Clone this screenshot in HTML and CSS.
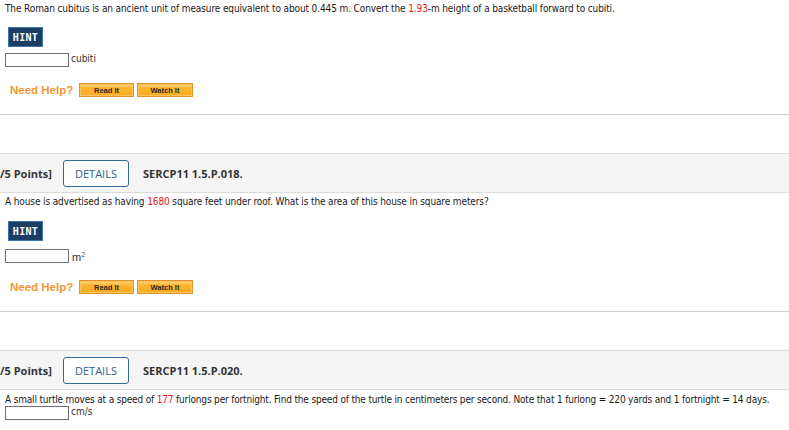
FILE: index.html
```html
<!DOCTYPE html>
<html lang="en">
<head>
    <meta charset="UTF-8">
    <meta name="viewport" content="width=device-width, initial-scale=1.0">
    <title>Assignment</title>
    <link rel="stylesheet" href="styles.css">
</head>
<body>
    <div class="question first">
        <p class="prompt">The Roman cubitus is an ancient unit of measure equivalent to about 0.445 m. Convert the <span class="val">1.93</span>-m height of a basketball forward to cubiti.</p>
        <button class="hint">HINT</button>
        <div class="answer">
            <input class="box" type="text">
            <span class="unit">cubiti</span>
        </div>
        <div class="help">
            <span class="help-label">Need Help?</span>
            <button class="help-btn">Read It</button>
            <button class="help-btn">Watch It</button>
        </div>
    </div>

    <div class="qhead">
        <span class="points">/5 Points]</span>
        <button class="details">DETAILS</button>
        <span class="code">SERCP11 1.5.P.018.</span>
    </div>
    <div class="question">
        <p class="prompt">A house is advertised as having <span class="val">1680</span> square feet under roof. What is the area of this house in square meters?</p>
        <button class="hint">HINT</button>
        <div class="answer">
            <input class="box" type="text">
            <span class="unit sq">m<sup>2</sup></span>
        </div>
        <div class="help">
            <span class="help-label">Need Help?</span>
            <button class="help-btn">Read It</button>
            <button class="help-btn">Watch It</button>
        </div>
    </div>

    <div class="qhead">
        <span class="points">/5 Points]</span>
        <button class="details">DETAILS</button>
        <span class="code">SERCP11 1.5.P.020.</span>
    </div>
    <div class="question last">
        <p class="prompt">A small turtle moves at a speed of <span class="val">177</span> furlongs per fortnight. Find the speed of the turtle in centimeters per second. Note that 1 furlong = 220 yards and 1 fortnight = 14 days.</p>
        <div class="answer tight">
            <input class="box" type="text">
            <span class="unit">cm/s</span>
        </div>
        <div class="help">
            <span class="help-label">Need Help?</span>
            <button class="help-btn">Read It</button>
            <button class="help-btn">Watch It</button>
        </div>
    </div>
</body>
</html>
```

FILE: styles.css
```css
* {
    box-sizing: border-box;
    margin: 0;
    padding: 0;
}

body {
    font-family: "DejaVu Sans Condensed", "DejaVu Sans", sans-serif;
    font-size: 10px;
    color: #1a1a1a;
    background: #fff;
    overflow: hidden;
    height: 430px;
}

.question {
    padding: 2px 0 17px;
    border-bottom: 1px solid #cfcfcf;
    margin-bottom: 38px;
}

.question.last {
    border-bottom: none;
    margin-bottom: 0;
    padding-top: 3px;
}

.prompt {
    line-height: 14px;
    padding-left: 5px;
    white-space: nowrap;
    letter-spacing: -0.12px;
}

.question.last .prompt {
    line-height: 13px;
    letter-spacing: -0.17px;
}

.val {
    color: #f0141e;
}

.hint {
    display: block;
    margin: 11px 0 0 8px;
    width: 35px;
    height: 20px;
    background: #1d3e64;
    border: 1px solid #3b74ad;
    color: #fff;
    font-family: "DejaVu Sans Mono", monospace;
    font-weight: bold;
    font-size: 10px;
    letter-spacing: 0.3px;
    cursor: pointer;
}

.question:not(.first) .hint {
    margin-top: 12px;
}

.answer {
    display: flex;
    align-items: flex-start;
    margin: 6px 0 0 5px;
    height: 14px;
}

.question:not(.first) .answer {
    margin-top: 8px;
}

.question .answer.tight {
    margin-top: 0;
}

.box {
    width: 64px;
    height: 14px;
    border: 1px solid #707070;
    background: #fff;
}

.unit {
    margin-left: 2px;
    line-height: 12px;
    color: #333;
}

.unit sup {
    font-size: 7px;
    vertical-align: 4px;
    color: #556;
}

.sq {
    font-family: "Liberation Sans", sans-serif;
    font-size: 11px;
    margin-left: 3px;
}

.help {
    display: flex;
    align-items: center;
    margin: 16px 0 0 10px;
    height: 14px;
}

.question:not(.first) .help {
    margin-top: 17px;
}

.help-label {
    width: 69px;
    flex: none;
    font-family: "Liberation Sans", Arial, sans-serif;
    font-weight: bold;
    font-size: 11.5px;
    color: #f29531;
    white-space: nowrap;
}

.help-btn {
    flex: none;
    width: 55px;
    height: 14px;
    margin-right: 3px;
    border: 1px solid #e0922c;
    background: linear-gradient(#ffd98a, #fdb42c 35%, #fbab1f);
    box-shadow: inset 0 0 0 1px #f7c35e;
    font-family: "Liberation Sans", Arial, sans-serif;
    font-weight: bold;
    font-size: 7.5px;
    color: #2a2a2a;
    cursor: pointer;
}

.help-btn + .help-btn {
    width: 56px;
}

.qhead {
    display: flex;
    align-items: center;
    height: 40px;
    background: #f5f5f5;
    border-top: 1px solid #dcdcdc;
    border-bottom: 1px solid #dcdcdc;
    font-family: "Open Sans", sans-serif;
    font-size: 11px;
    color: #333;
}

.points {
    font-weight: bold;
    width: 63px;
}

.details {
    width: 66px;
    height: 27px;
    border: 1px solid #2f6a9c;
    border-radius: 3px;
    background: #fff;
    color: #2c5f8e;
    font-family: "Open Sans", sans-serif;
    font-size: 11px;
    cursor: pointer;
}

.code {
    margin-left: 14px;
    font-weight: bold;
}
```
